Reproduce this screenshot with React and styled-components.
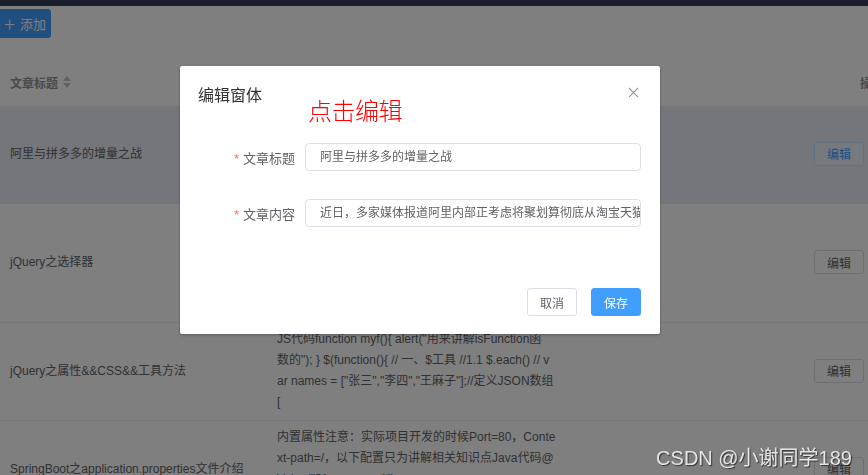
import React from 'react';
import styled, { createGlobalStyle } from 'styled-components';

const GlobalStyle = createGlobalStyle`
    body {
        margin: 0;
        padding: 0;
        background: #fff;
        font-family: 'Liberation Sans', 'Noto Sans CJK SC', sans-serif;
        overflow: hidden;
    }
`;

const Page = styled.div`
    width: 868px;
    height: 475px;
    overflow: hidden;
    position: relative;
`;

const TopBar = styled.div`
    height: 6px;
    background: #303c58;
`;

const Toolbar = styled.div`
    height: 52px;
    padding-top: 3px;
    box-sizing: border-box;
`;

const AddButton = styled.button`
    height: 29px;
    width: 51px;
    padding: 0 0 0 3px;
    border: none;
    border-radius: 0 3px 3px 0;
    background: #409eff;
    color: #fff;
    font-size: 13px;
    font-family: inherit;
    display: flex;
    align-items: center;
    gap: 4px;
`;

const Table = styled.div`
    width: 868px;
`;

const Row = styled.div`
    display: grid;
    grid-template-columns: 267px 270px 267px 80px;
    background: ${(p) => (p.$active ? '#e9edf6' : '#fff')};
    border-bottom: 1px solid #ebeef5;
    align-items: center;
`;

const HeadRow = styled(Row)`
    height: 48px;
    border-bottom: none;
`;

const HeadCell = styled.div`
    padding-left: ${(p) => p.$pad || 10}px;
    font-size: 12px;
    font-weight: bold;
    color: #909399;
    display: flex;
    align-items: center;
    gap: 5px;
    white-space: nowrap;
`;

const SortIcon = styled.span`
    display: inline-flex;
    flex-direction: column;
    gap: 2px;

    &::before,
    &::after {
        content: '';
        border-left: 4px solid transparent;
        border-right: 4px solid transparent;
    }
    &::before {
        border-bottom: 5px solid #c0c4cc;
    }
    &::after {
        border-top: 5px solid #c0c4cc;
    }
`;

const Cell = styled.div`
    padding: 6px 10px 7px;
    font-size: 12px;
    color: #606266;
    line-height: 21px;
    white-space: nowrap;
`;

const EditButton = styled.button`
    width: 50px;
    height: 24px;
    font-size: 12px;
    font-family: inherit;
    border-radius: 3px;
    border: 1px solid ${(p) => (p.$focus ? '#c6e2ff' : '#dcdfe6')};
    background: ${(p) => (p.$focus ? '#ecf5ff' : '#fff')};
    color: ${(p) => (p.$focus ? '#409eff' : '#606266')};
`;

const Mask = styled.div`
    position: fixed;
    inset: 0;
    background: rgba(0, 0, 0, 0.5);
    display: flex;
    align-items: flex-start;
    padding: 66px 0 0 180px;
`;

const Dialog = styled.div`
    position: relative;
    width: 480px;
    background: #fff;
    border-radius: 2px;
    box-shadow: 0 1px 3px rgba(0, 0, 0, 0.3);
`;

const DialogHeader = styled.div`
    display: flex;
    justify-content: space-between;
    align-items: center;
    padding: 18px 21px 10px 18px;
`;

const DialogTitle = styled.span`
    font-size: 16px;
    line-height: 24px;
    color: #303133;
`;

const CloseIcon = styled.svg`
    width: 11px;
    height: 11px;
    margin-top: -8px;
`;

const Note = styled.div`
    position: absolute;
    left: 128px;
    top: 26px;
    font-size: 24px;
    font-weight: 300;
    color: #ff0000;
    font-family: 'Noto Sans CJK SC', serif;
    letter-spacing: -0.5px;
`;

const DialogBody = styled.div`
    padding: 25px 19px 30px 20px;
    display: flex;
    flex-direction: column;
    gap: 28px;
`;

const FormItem = styled.div`
    display: flex;
    align-items: center;
`;

const Label = styled.label`
    width: 105px;
    padding-right: 10px;
    box-sizing: border-box;
    text-align: right;
    font-size: 13px;
    color: #606266;

    &::before {
        content: '*';
        color: #f56c6c;
        margin-right: 4px;
    }
`;

const Input = styled.div`
    flex: 1;
    height: 28px;
    box-sizing: border-box;
    border: 1px solid #dcdfe6;
    border-radius: 4px;
    padding: 0 15px 0 14px;
    font-size: 12px;
    line-height: 26px;
    color: #606266;
    white-space: nowrap;
    overflow: hidden;
`;

const DialogFooter = styled.div`
    display: flex;
    justify-content: flex-end;
    gap: 14px;
    padding: 31px 19px 18px;
`;

const FooterButton = styled.button`
    width: 50px;
    height: 28px;
    font-size: 12px;
    font-family: inherit;
    border-radius: 3px;
    border: 1px solid ${(p) => (p.$primary ? '#409eff' : '#dcdfe6')};
    background: ${(p) => (p.$primary ? '#409eff' : '#fff')};
    color: ${(p) => (p.$primary ? '#fff' : '#606266')};
`;

const Watermark = styled.div`
    position: fixed;
    right: 16px;
    bottom: 4px;
    font-size: 20px;
    color: #e6e6e6;
    text-shadow: 1px 1px 1px rgba(0, 0, 0, 0.6);
    font-family: 'Liberation Sans', 'Noto Sans CJK SC', sans-serif;
`;

const rows = [
    {
        title: '阿里与拼多多的增量之战',
        lines: ['近日，多家媒体报道阿里内部正考虑将聚划算', '彻底从淘宝天猫体系中剥离出来，独立运营，', '以应对拼多多带来的下沉市场竞争压力。', '……'],
        active: true,
    },
    {
        title: 'jQuery之选择器',
        lines: ['jQuery选择器 基本选择器 $("#id")', '$(".class") $("div") 层级选择器', '$("div p") $("div>p") 过滤选择器', ':first :last :even :odd', '['],
    },
    {
        title: 'jQuery之属性&&CSS&&工具方法',
        lines: ['JS代码function myf(){ alert("用来讲解isFunction函', '数的"); } $(function(){ // 一、$工具 //1.1 $.each() // v', 'ar names = ["张三","李四","王麻子"];//定义JSON数组', '['],
    },
    {
        title: 'SpringBoot之application.properties文件介绍',
        lines: ['内置属性注意：实际项目开发的时候Port=80，Conte', 'xt-path=/，以下配置只为讲解相关知识点Java代码@', 'Value("${server.port}")', 'private String port;'],
    },
];

export default function App() {
    return (
        <>
            <GlobalStyle />
            <Page>
                <TopBar />
                <Toolbar>
                    <AddButton>
                        <span>＋</span>
                        <span>添加</span>
                    </AddButton>
                </Toolbar>
                <Table>
                    <HeadRow>
                        <HeadCell>
                            文章标题
                            <SortIcon />
                        </HeadCell>
                        <HeadCell>文章内容</HeadCell>
                        <HeadCell>创建时间</HeadCell>
                        <HeadCell $pad={56}>操作</HeadCell>
                    </HeadRow>
                    {rows.map((r) => (
                        <Row key={r.title} $active={r.active}>
                            <Cell>{r.title}</Cell>
                            <Cell>
                                {r.lines.map((l, i) => (
                                    <div key={i}>{l}</div>
                                ))}
                            </Cell>
                            <Cell />
                            <Cell>
                                <EditButton $focus={r.active}>编辑</EditButton>
                            </Cell>
                        </Row>
                    ))}
                </Table>
                <Mask>
                    <Dialog>
                        <DialogHeader>
                            <DialogTitle>编辑窗体</DialogTitle>
                            <CloseIcon viewBox="0 0 12 12">
                                <path d="M1 1L11 11M11 1L1 11" stroke="#909399" strokeWidth="1.2" fill="none" />
                            </CloseIcon>
                        </DialogHeader>
                        <Note>点击编辑</Note>
                        <DialogBody>
                            <FormItem>
                                <Label>文章标题</Label>
                                <Input>阿里与拼多多的增量之战</Input>
                            </FormItem>
                            <FormItem>
                                <Label>文章内容</Label>
                                <Input>近日，多家媒体报道阿里内部正考虑将聚划算彻底从淘宝天猫体系中剥离出来</Input>
                            </FormItem>
                        </DialogBody>
                        <DialogFooter>
                            <FooterButton>取消</FooterButton>
                            <FooterButton $primary>保存</FooterButton>
                        </DialogFooter>
                    </Dialog>
                </Mask>
                <Watermark>CSDN @小谢同学189</Watermark>
            </Page>
        </>
    );
}
